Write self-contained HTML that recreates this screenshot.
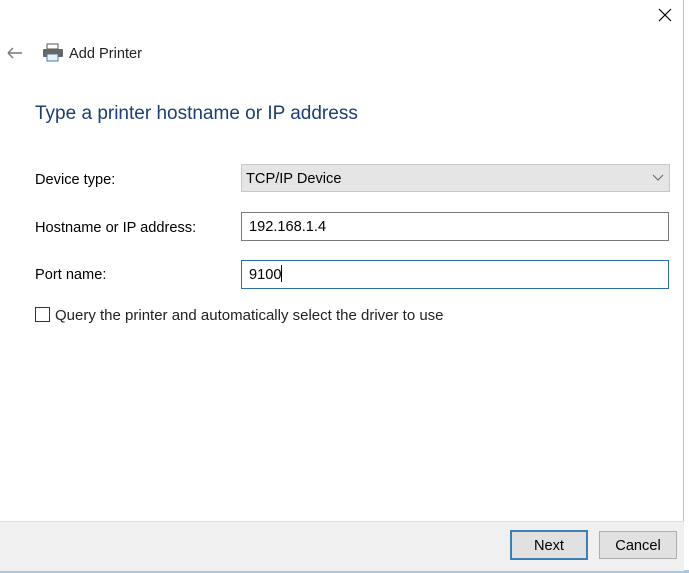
<!DOCTYPE html>
<html><head><meta charset="utf-8"><style>
html,body{margin:0;padding:0}
body{width:689px;height:573px;position:relative;background:#fff;font-family:"Liberation Sans",sans-serif;overflow:hidden;color:#000}
.a{position:absolute}
.lbl{font-size:14.6px;color:#000}
.box{position:absolute;left:241px;width:419px;height:27px;border:1px solid #7a7a7a;background:#fff;font-size:14.6px;line-height:29px;padding-left:7px;box-sizing:content-box}
.btn{position:absolute;top:531px;height:26px;font-size:14.6px;text-align:center;line-height:28px;background:#e1e1e1;border:1px solid #adadad}
</style></head><body>
<div class="a" style="right:0;top:0;width:5px;height:573px;background:#fff;border-left:1px solid #a6c8e6"></div>
<div class="a" style="left:0;bottom:0;width:689px;height:3px;background:#a6c8e6"></div>
<svg class="a" style="left:657px;top:7px" width="16" height="16"><path d="M2 2L14 14M14 2L2 14" stroke="#000" stroke-width="1.2"/></svg>
<svg class="a" style="left:6px;top:46px" width="18" height="14"><path d="M2 7H16M2 7L7 2M2 7L7 12" stroke="#777" stroke-width="1.4" fill="none"/></svg>
<svg class="a" style="left:42px;top:43px" width="22" height="20"><rect x="5" y="1" width="11" height="5" fill="#fff" stroke="#555"/><rect x="1" y="6" width="20" height="8" rx="1" fill="#666"/><rect x="5" y="11" width="11" height="7" fill="#e8f0f8" stroke="#4a7aa8"/></svg>
<div class="a" style="left:69px;top:46px;font-size:14.6px;color:#222">Add Printer</div>
<div class="a" style="left:35px;top:103px;font-size:19px;color:#1c3d7a">Type a printer hostname or IP address</div>
<div class="a lbl" style="left:35px;top:172px">Device type:</div>
<div class="a lbl" style="left:35px;top:220px">Hostname or IP address:</div>
<div class="a lbl" style="left:35px;top:267px">Port name:</div>
<div class="box" style="top:164px;background:#e5e5e5;border-color:#c8c8c8;height:26px;line-height:28px;padding-left:4px;width:423px">TCP/IP Device</div>
<svg class="a" style="left:652px;top:174px" width="12" height="8"><path d="M1 1L6 6L11 1" stroke="#666" fill="none"/></svg>
<div class="box" style="top:212px">192.168.1.4</div>
<div class="box" style="top:260px;border-color:#2e6ea6">9100<span style="display:inline-block;width:1px;height:17px;background:#000;vertical-align:-3px"></span></div>
<div class="a" style="left:35px;top:307px;width:13px;height:13px;border:1px solid #333;background:#fff"></div>
<div class="a" style="left:55px;top:307px;color:#222;font-size:15px">Query the printer and automatically select the driver to use</div>
<div class="a" style="left:0;top:521px;width:684px;height:49px;background:#f0f0f0;border-top:1px solid #dfdfdf"></div>
<div class="btn" style="left:510px;width:74px;border:2px solid #3c7fb1;top:530px">Next</div>
<div class="btn" style="left:599px;width:76px">Cancel</div>
</body></html>
